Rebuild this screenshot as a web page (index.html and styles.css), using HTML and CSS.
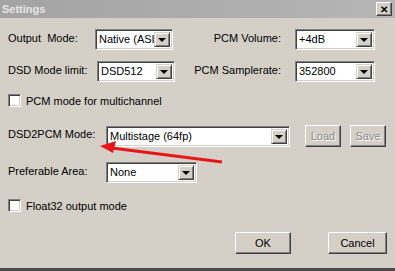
FILE: index.html
```html
<!DOCTYPE html>
<html lang="en">
<head>
    <meta charset="UTF-8">
    <title>Settings</title>
    <link rel="stylesheet" href="styles.css">
</head>
<body>
    <div class="window">
        <div class="titlebar">
            <span class="title">Settings</span>
            <span class="close-btn">&#x2715;</span>
        </div>

        <div class="content">
            <div class="row row-1">
                <span class="label lbl-output">Output&nbsp; Mode:</span>
                <div class="combo combo-small">
                    <span class="combo-text">Native (ASIO)</span>
                    <span class="combo-btn"><i class="arrow"></i></span>
                </div>
                <span class="label lbl-right">PCM Volume:</span>
                <div class="combo combo-right">
                    <span class="combo-text">+4dB</span>
                    <span class="combo-btn"><i class="arrow"></i></span>
                </div>
            </div>

            <div class="row row-2">
                <span class="label lbl-dsd">DSD Mode limit:</span>
                <div class="combo combo-small">
                    <span class="combo-text">DSD512</span>
                    <span class="combo-btn"><i class="arrow"></i></span>
                </div>
                <span class="label lbl-right lbl-rate">PCM Samplerate:</span>
                <div class="combo combo-right">
                    <span class="combo-text">352800</span>
                    <span class="combo-btn"><i class="arrow"></i></span>
                </div>
            </div>

            <label class="check-row row-3">
                <span class="checkbox"></span>
                <span>PCM mode for multichannel</span>
            </label>

            <div class="row row-4">
                <span class="label lbl-wide">DSD2PCM Mode:</span>
                <div class="combo combo-mode">
                    <span class="combo-text">Multistage (64fp)</span>
                    <span class="combo-btn"><i class="arrow"></i></span>
                </div>
                <button class="btn btn-small" disabled>Load</button>
                <button class="btn btn-small" disabled>Save</button>
            </div>

            <div class="row row-5">
                <span class="label lbl-wide">Preferable Area:</span>
                <div class="combo combo-area">
                    <span class="combo-text">None</span>
                    <span class="combo-btn"><i class="arrow"></i></span>
                </div>
            </div>

            <label class="check-row row-6">
                <span class="checkbox"></span>
                <span>Float32 output mode</span>
            </label>

            <div class="footer">
                <button class="btn btn-ok">OK</button>
                <button class="btn btn-cancel">Cancel</button>
            </div>
        </div>

        <!-- red annotation arrow drawn over the dialog -->
        <svg class="annotation" width="395" height="271" viewBox="0 0 395 271">
            <line x1="222" y1="162" x2="112" y2="148" stroke="#e8161b" stroke-width="3" />
            <polygon points="100,146 116,141 113,153" fill="#e8161b" />
        </svg>
    </div>
</body>
</html>
```

FILE: styles.css
```css
* {
    box-sizing: border-box;
}
body {
    margin: 0;
    font-family: "Liberation Sans", Arial, sans-serif;
    font-size: 11px;
    color: #000;
    background: #d4d0c8;
}
.window {
    position: relative;
    width: 395px;
    height: 271px;
    background: #d4d0c8;
    border-bottom: 3px solid #4a4a4a;
    overflow: hidden;
}
.titlebar {
    height: 18px;
    display: flex;
    align-items: center;
    justify-content: space-between;
    padding: 0 3px 0 2px;
    background: linear-gradient(to right, #a3a3a3, #b5b5b5);
}
.title {
    color: #e6e6e6;
    font-weight: bold;
    font-size: 11px;
}
.close-btn {
    width: 16px;
    height: 14px;
    display: flex;
    align-items: center;
    justify-content: center;
    font-size: 10px;
    font-weight: bold;
    background: #d4d0c8;
    border: 1px solid;
    border-color: #fff #404040 #404040 #fff;
    box-shadow: inset -1px -1px #808080;
}

.content {
    padding: 0 0 0 8px;
    display: flex;
    flex-direction: column;
}
.row {
    display: flex;
    align-items: center;
}
.row-1 { margin-top: 11px; }
.row-2 { margin-top: 11px; }
.row-3 { margin-top: 12px; }
.row-4 { margin-top: 18px; }
.row-5 { margin-top: 15px; }
.row-6 { margin-top: 16px; }

.label {
    position: relative;
    top: -2px;
    white-space: nowrap;
}
.lbl-output { width: 87px; }
.lbl-dsd { width: 89px; }
.lbl-right {
    width: 108px;
    text-align: right;
}
.lbl-wide { width: 98px; }
.row-1 .lbl-right { margin-right: 14px; }
.row-2 .lbl-right { margin-right: 14px; width: 106px; }

/* combo boxes */
.combo {
    height: 21px;
    display: flex;
    background: #fff;
    border: 1px solid;
    border-color: #808080 #fff #fff #808080;
    box-shadow: inset 1px 1px #404040, inset -1px -1px #d4d0c8;
    padding: 2px;
}
.combo-small { width: 78px; }
.combo-right { width: 80px; }
.combo-mode { width: 184px; }
.combo-area { width: 91px; }
.combo-text {
    flex: 1;
    overflow: hidden;
    white-space: nowrap;
    padding-left: 1px;
    line-height: 15px;
}
.combo-btn {
    width: 16px;
    height: 15px;
    flex: none;
    display: flex;
    align-items: center;
    justify-content: center;
    background: #d4d0c8;
    border: 1px solid;
    border-color: #d4d0c8 #404040 #404040 #d4d0c8;
    box-shadow: inset 1px 1px #fff, inset -1px -1px #808080;
}
.arrow {
    width: 0;
    height: 0;
    border-left: 4px solid transparent;
    border-right: 4px solid transparent;
    border-top: 4px solid #000;
    margin-top: 1px;
}

/* checkboxes */
.check-row {
    display: flex;
    align-items: center;
    gap: 5px;
    height: 13px;
}
.checkbox {
    width: 13px;
    height: 13px;
    background: #fff;
    border: 1px solid;
    border-color: #808080 #fff #fff #808080;
    box-shadow: inset 1px 1px #404040, inset -1px -1px #d4d0c8;
}

/* push buttons */
.btn {
    font-family: inherit;
    font-size: 11px;
    height: 22px;
    padding: 0;
    background: #d4d0c8;
    color: #000;
    border: 1px solid;
    border-color: #fff #404040 #404040 #fff;
    box-shadow: inset -1px -1px #808080;
}
.btn:disabled {
    color: #8a8a8a;
    text-shadow: 1px 1px #fff;
}
.btn-small { width: 36px; }
.row-4 .btn-small:first-of-type { margin-left: 15px; }
.row-4 .btn-small + .btn-small { margin-left: 9px; }
.footer {
    display: flex;
    margin-top: 20px;
    padding-left: 227px;
}
.btn-ok { width: 56px; }
.btn-cancel { width: 59px; margin-left: 37px; }

.annotation {
    position: absolute;
    left: 0;
    top: 0;
    pointer-events: none;
}
```
